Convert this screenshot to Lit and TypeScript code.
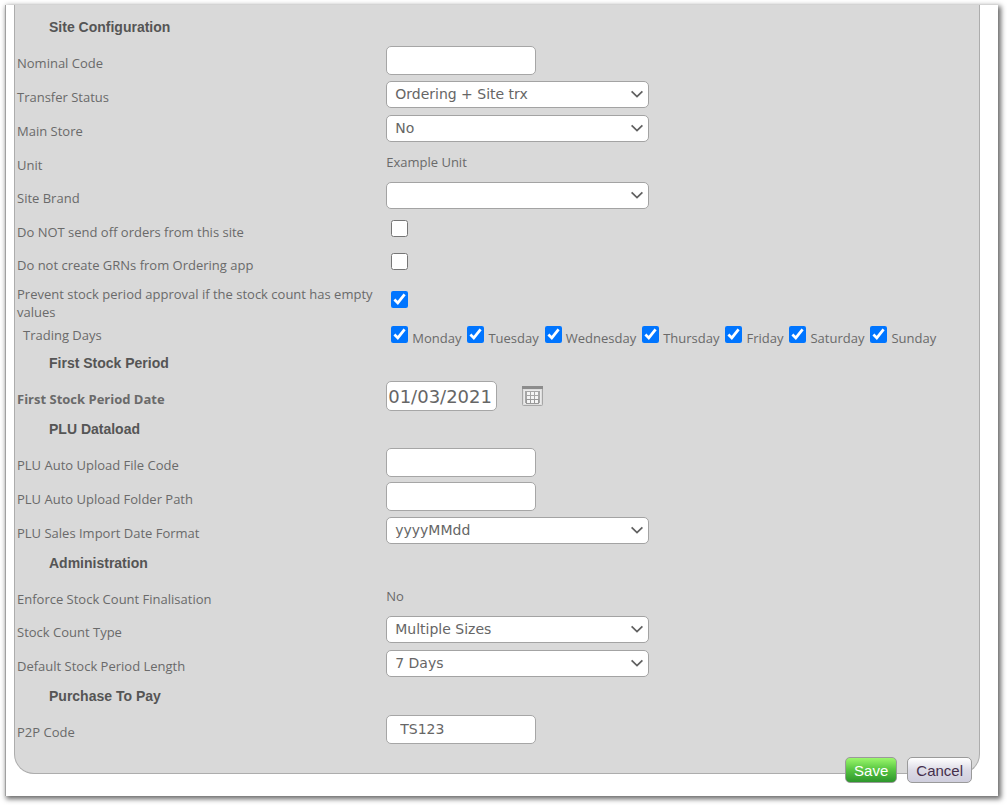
import { LitElement, html, css, svg, nothing, type TemplateResult } from "lit";
import { customElement, property } from "lit/decorators.js";

type Field =
  | { kind: "heading"; label: string }
  | { kind: "input"; id: string; label: string; value?: string }
  | { kind: "select"; id: string; label: string; value: string }
  | { kind: "text"; label: string; value: string }
  | { kind: "check"; id: string; label: string }
  | { kind: "approval"; id: string; label: string }
  | { kind: "days"; label: string; days: string[] }
  | { kind: "date"; id: string; label: string; value: string };

const FIELDS: Field[] = [
  { kind: "heading", label: "Site Configuration" },
  { kind: "input", id: "nominal-code", label: "Nominal Code" },
  { kind: "select", id: "transfer-status", label: "Transfer Status", value: "Ordering + Site trx" },
  { kind: "select", id: "main-store", label: "Main Store", value: "No" },
  { kind: "text", label: "Unit", value: "Example Unit" },
  { kind: "select", id: "site-brand", label: "Site Brand", value: "" },
  { kind: "check", id: "no-send", label: "Do NOT send off orders from this site" },
  { kind: "check", id: "no-grn", label: "Do not create GRNs from Ordering app" },
  {
    kind: "approval",
    id: "prevent-approval",
    label: "Prevent stock period approval if the stock count has empty values",
  },
  {
    kind: "days",
    label: "Trading Days",
    days: ["Monday", "Tuesday", "Wednesday", "Thursday", "Friday", "Saturday", "Sunday"],
  },
  { kind: "heading", label: "First Stock Period" },
  { kind: "date", id: "first-date", label: "First Stock Period Date", value: "01/03/2021" },
  { kind: "heading", label: "PLU Dataload" },
  { kind: "input", id: "plu-file", label: "PLU Auto Upload File Code" },
  { kind: "input", id: "plu-folder", label: "PLU Auto Upload Folder Path" },
  { kind: "select", id: "plu-format", label: "PLU Sales Import Date Format", value: "yyyyMMdd" },
  { kind: "heading", label: "Administration" },
  { kind: "text", label: "Enforce Stock Count Finalisation", value: "No" },
  { kind: "select", id: "count-type", label: "Stock Count Type", value: "Multiple Sizes" },
  { kind: "select", id: "period-length", label: "Default Stock Period Length", value: "7 Days" },
  { kind: "heading", label: "Purchase To Pay" },
  { kind: "input", id: "p2p-code", label: "P2P Code", value: "TS123" },
];

@customElement("select-box")
export class SelectBox extends LitElement {
  @property() label = "";
  @property() value = "";

  static styles = css`
    :host {
      display: grid;
      width: 263px;
      max-width: 100%;
    }
    .field,
    .arrow {
      grid-area: 1 / 1;
    }
    .field {
      appearance: none;
      box-sizing: border-box;
      width: 100%;
      height: 27px;
      margin: 0;
      padding: 0 28px 0 8px;
      border: 1px solid #a3a3a3;
      border-radius: 5px;
      background: #fff;
      color: #666;
      font: 14px "DejaVu Sans", sans-serif;
    }
    .arrow {
      width: 12px;
      height: 8px;
      margin-right: 6px;
      place-self: center end;
      pointer-events: none;
    }
  `;

  render() {
    return html`
      <select class="field" aria-label=${this.label}>
        <option selected>${this.value}</option>
      </select>
      <svg class="arrow" viewBox="0 0 12 8" aria-hidden="true">
        <path d="M.6 1.4 6 6.6 11.4 1.4" fill="none" stroke="#606060" stroke-width="1.8" />
      </svg>
    `;
  }
}

@customElement("app-root")
export class AppRoot extends LitElement {
  static styles = css`
    :host {
      display: block;
      overflow: hidden;
      background: #fff;
      color: #6a6a6a;
      font: 13px/18px "Open Sans", "Noto Sans", sans-serif;
    }
    .sheet {
      margin: 5px 9px 9px 5px;
      padding: 0 18px 13px 8px;
      border-left: 1px solid #a0a0a0;
      background: #fff;
      box-shadow: 2px 2px 5px 1px #6a6a6a;
    }
    .panel {
      padding: 6px 2px 27px;
      border: 1px solid #adadad;
      border-top: 0;
      border-radius: 0 0 20px 20px;
      background: #d9d9d9;
    }
    .heading {
      margin: 0;
      padding-left: 32px;
      color: #555;
      font: bold 14px/32px "Liberation Sans", Arial, sans-serif;
    }
    .row {
      display: grid;
      grid-template-columns: minmax(0, 5fr) minmax(0, 8fr);
      align-items: center;
      min-height: 34px;
    }
    .row.text,
    .row.check {
      min-height: 33px;
    }
    .row.approval {
      box-sizing: border-box;
      min-height: 43px;
      padding-top: 7px;
      align-items: start;
    }
    .row.days {
      min-height: 26px;
    }
    .name {
      padding-top: 6px;
    }
    .approval .name {
      padding-top: 0;
    }
    .days .name {
      padding: 2px 0 0 6px;
    }
    .date .name {
      font-weight: bold;
    }
    .box {
      box-sizing: border-box;
      width: 150px;
      height: 29px;
      margin: 0;
      padding: 0 13px;
      border: 1px solid #a6a6a6;
      border-radius: 5px;
      background: #fff;
      color: #666;
      font: 14px "DejaVu Sans", sans-serif;
    }
    .box.day {
      width: 111px;
      height: 30px;
      padding: 0 1px;
      font-size: 18px;
    }
    .tick {
      display: block;
      flex: none;
      width: 17px;
      height: 17px;
      margin: 0 0 0 5px;
      accent-color: #0075ff;
    }
    .approval .tick {
      margin-top: 6px;
    }
    .week {
      display: flex;
      flex-wrap: wrap;
      column-gap: 1px;
    }
    .weekday {
      display: flex;
      gap: 4px;
    }
    .weekday .tick {
      margin-top: 4px;
    }
    .weekday-name {
      padding-top: 7px;
    }
    .picker {
      display: flex;
      align-items: center;
      gap: 24px;
    }
    .calendar {
      display: block;
      margin: 0;
      padding: 0;
      border: 0;
      background: none;
    }
    .calendar-icon {
      display: block;
      width: 23px;
      height: 21px;
    }
    .actions {
      position: relative;
      display: flex;
      justify-content: flex-end;
      gap: 10px;
      margin-top: -17px;
      padding-right: 8px;
    }
    .action {
      height: 26px;
      margin: 0;
      padding: 0 8px;
      border: 1px solid #9a9a9a;
      border-radius: 5px;
      font: 15px "Liberation Sans", Arial, sans-serif;
    }
    .save {
      background: linear-gradient(#9bf76c, #5cc944 45%, #2d962c);
      color: #fff;
    }
    .cancel {
      background: linear-gradient(#fff, #dcdbe6 50%, #cfcedd);
      color: #452f4c;
    }
  `;

  private calendarIcon() {
    const cells = [0, 1, 2].flatMap((r) =>
      [0, 1, 2].map((c) => svg`<rect x=${6 + c * 4} y=${6 + r * 4} width="3" height="3" fill="#f4f4f4" />`),
    );
    return html`<svg class="calendar-icon" viewBox="0 0 23 21" aria-hidden="true">
      <rect x="1.5" y="1.5" width="20" height="18" rx="1" fill="#dedede" stroke="#a6a6a6" />
      <rect x="1" y="0" width="21" height="3" fill="#8c8c8c" />
      <rect x="3" y="4" width="17" height="14" fill="#ebebeb" />
      <rect x="4" y="5" width="15" height="12" fill="#a6a6a6" />
      <rect x="5" y="13" width="13" height="5" fill="#989898" />
      ${cells}
    </svg>`;
  }

  private control(f: Field): TemplateResult | typeof nothing {
    switch (f.kind) {
      case "input":
        return html`<div><input class="box" id=${f.id} type="text" .value=${f.value ?? ""} /></div>`;
      case "select":
        return html`<select-box id=${f.id} .label=${f.label} .value=${f.value}></select-box>`;
      case "text":
        return html`<span>${f.value}</span>`;
      case "check":
        return html`<input class="tick" id=${f.id} type="checkbox" />`;
      case "approval":
        return html`<input class="tick" id=${f.id} type="checkbox" checked />`;
      case "days":
        return html`<div class="week" role="group" aria-label=${f.label}>
          ${f.days.map(
            (d) => html`<label class="weekday">
              <input class="tick" type="checkbox" checked /><span class="weekday-name">${d}</span>
            </label>`,
          )}
        </div>`;
      case "date":
        return html`<div class="picker">
          <input class="box day" id=${f.id} type="text" .value=${f.value} />
          <button class="calendar" type="button" aria-label="Choose date">${this.calendarIcon()}</button>
        </div>`;
      default:
        return nothing;
    }
  }

  private row(f: Field) {
    if (f.kind === "heading") return html`<h2 class="heading">${f.label}</h2>`;
    const name =
      "id" in f
        ? html`<label class="name" for=${f.id}>${f.label}</label>`
        : html`<span class="name">${f.label}</span>`;
    return html`<div class="row ${f.kind}">${name}${this.control(f)}</div>`;
  }

  render() {
    return html`
      <form class="sheet" @submit=${(e: Event) => e.preventDefault()}>
        <div class="panel">${FIELDS.map((f) => this.row(f))}</div>
        <div class="actions">
          <button class="action save" type="submit">Save</button>
          <button class="action cancel" type="button">Cancel</button>
        </div>
      </form>
    `;
  }
}
